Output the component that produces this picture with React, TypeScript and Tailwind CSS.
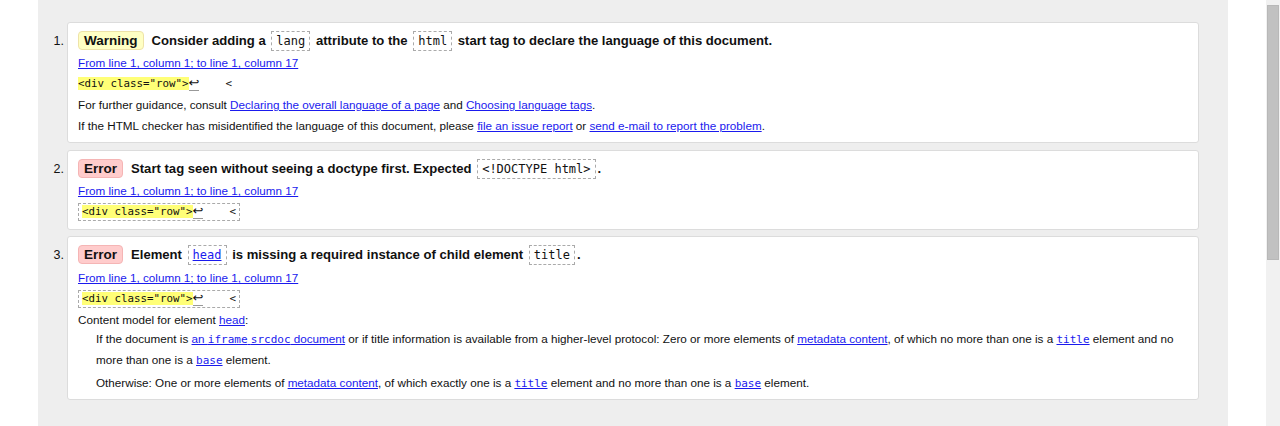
import React from "react";

const A = ({ children, mono }: { children: React.ReactNode; mono?: boolean }) => (
  <a
    href="#"
    className={
      "text-[#1a1aee] underline decoration-[#1a1aee] " +
      (mono ? "font-['DejaVu_Sans_Mono',monospace] text-[11px] leading-[14px]" : "")
    }
  >
    {children}
  </a>
);

const Code = ({ children }: { children: React.ReactNode }) => (
  <code className="mx-[2px] inline-block border border-dashed border-[#aaa] px-[4px] font-['DejaVu_Sans_Mono',monospace] text-[12px] font-normal leading-[18px]">
    {children}
  </code>
);

const Badge = ({ kind }: { kind: "Warning" | "Error" }) => (
  <span
    className={
      "mr-[8px] inline-block rounded-[4px] border px-[5px] text-[13.5px] leading-[17px] " +
      (kind === "Warning"
        ? "border-[#eee3a8] bg-[#ffffc4]"
        : "border-[#f5b5b5] bg-[#ffcccc]")
    }
  >
    {kind}
  </span>
);

const Extract = ({ boxed }: { boxed?: boolean }) => (
  <div className="flex h-[21px] items-center">
    <code
      className={
        "inline-block whitespace-pre font-['DejaVu_Sans_Mono',monospace] text-[10.8px] leading-[16px] " +
        (boxed ? "border border-dashed border-[#aaa] px-[3px]" : "")
      }
    >
      <span className="bg-[#ffff77]">&lt;div class="row"&gt;</span>
      <span className="border-b border-[#999] font-['DejaVu_Sans',sans-serif] text-[13px] leading-[13px]">↩</span>
      {"    <"}
    </code>
  </div>
);

const Card = ({ n, children, extra = "" }: { n: number; children: React.ReactNode; extra?: string }) => (
  <div className={"flex " + extra}>
    <div className="w-[29px] shrink-0 pr-[3px] pt-[10px] text-right text-[12.5px] leading-[18px]">{n}.</div>
    <div className="flex-1 rounded-[3px] border border-[#dcdcdc] bg-white px-[10px] pb-[6px] pt-[7px]">
      {children}
    </div>
  </div>
);

const Title = ({ children }: { children: React.ReactNode }) => (
  <div className="flex h-[22px] items-center text-[13.1px] font-bold">
    <div>{children}</div>
  </div>
);

const Line = ({ children }: { children: React.ReactNode }) => (
  <div className="h-[21px] leading-[21px]">{children}</div>
);

const Mono = ({ children }: { children: React.ReactNode }) => (
  <span className="font-['DejaVu_Sans_Mono',monospace] text-[11px] leading-[14px]">{children}</span>
);

export default function App() {
  return (
    <div className="flex h-[426px] w-[1280px] overflow-hidden bg-white font-['Liberation_Sans',Arial,sans-serif] text-[11.7px] text-[#111]">
      <div className="w-[38px] shrink-0" />
      <div className="flex w-[1190px] shrink-0 flex-col gap-[7px] bg-[#eeeeee] pl-0 pr-[29px] pt-[22px]">
        <Card n={1}>
          <Title>
            <Badge kind="Warning" />
            Consider adding a <Code>lang</Code> attribute to the <Code>html</Code> start tag to declare the language of this document.
          </Title>
          <Line>
            <A>From line 1, column 1; to line 1, column 17</A>
          </Line>
          <Extract />
          <Line>
            For further guidance, consult <A>Declaring the overall language of a page</A> and <A>Choosing language tags</A>.
          </Line>
          <Line>
            If the HTML checker has misidentified the language of this document, please <A>file an issue report</A> or{" "}
            <A>send e-mail to report the problem</A>.
          </Line>
        </Card>
        <Card n={2}>
          <Title>
            <Badge kind="Error" />
            Start tag seen without seeing a doctype first. Expected <Code>&lt;!DOCTYPE html&gt;</Code>.
          </Title>
          <Line>
            <A>From line 1, column 1; to line 1, column 17</A>
          </Line>
          <div className="pb-[1px]">
            <Extract boxed />
          </div>
        </Card>
        <Card n={3} extra="-mt-[1px]">
          <Title>
            <Badge kind="Error" />
            Element{" "}
            <code className="mx-[2px] inline-block border border-dashed border-[#aaa] px-[4px] font-['DejaVu_Sans_Mono',monospace] text-[12px] font-normal leading-[18px]">
              <a href="#" className="text-[#1a1aee] underline">head</a>
            </code>{" "}
            is missing a required instance of child element <Code>title</Code>.
          </Title>
          <div className="mt-[1px]">
            <Line>
              <A>From line 1, column 1; to line 1, column 17</A>
            </Line>
          </div>
          <Extract boxed />
          <div className="mt-[3px] h-[16px] leading-[16px]">
            Content model for element <A>head</A>:
          </div>
          <div className="pl-[18px]">
            <div className="leading-[21px]">
              <div>
                If the document is{" "}
                <A>
                  an <Mono>iframe</Mono> <Mono>srcdoc</Mono> document
                </A>{" "}
                or if title information is available from a higher-level protocol: Zero or more elements of{" "}
                <A>metadata content</A>, of which no more than one is a <A mono>title</A> element and no
              </div>
              <div>
                more than one is a <A mono>base</A> element.
              </div>
            </div>
            <div className="mt-[2px] leading-[21px]">
              Otherwise: One or more elements of <A>metadata content</A>, of which exactly one is a <A mono>title</A> element and no more than one is a <A mono>base</A> element.
            </div>
          </div>
        </Card>
      </div>
      <div className="w-[38px] shrink-0" />
      <div className="relative w-[14px] shrink-0 bg-[#f1f1f1]">
        <div className="absolute left-[1px] top-[5px] h-[255px] w-[12px] border border-[#b8b8b8] bg-[#c1c1c1]" />
      </div>
    </div>
  );
}
